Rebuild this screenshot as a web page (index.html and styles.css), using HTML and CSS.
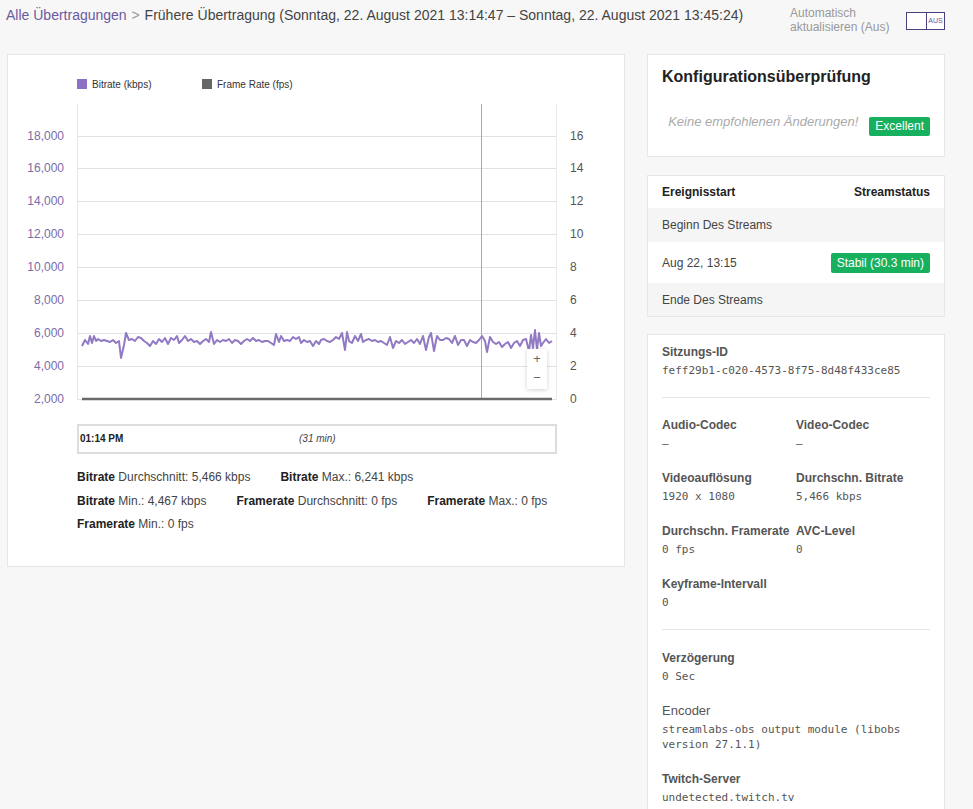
FILE: index.html
```html
<!DOCTYPE html>
<html lang="de">
<head>
<meta charset="utf-8">
<title>Frühere Übertragung</title>
<link rel="stylesheet" href="styles.css">
</head>
<body>
<header class="topbar">
  <div class="crumbs">
    <a class="crumb-link" href="#">Alle Übertragungen</a>
    <span class="crumb-sep">&gt;</span>
    <span class="crumb-current">Frühere Übertragung (Sonntag, 22. August 2021 13:14:47 – Sonntag, 22. August 2021 13:45:24)</span>
  </div>
  <div class="autorefresh">
    <div class="autorefresh-label">Automatisch<br>aktualisieren (Aus)</div>
    <div class="toggle"><span class="toggle-knob"></span><span class="toggle-text">AUS</span></div>
  </div>
</header>

<main class="layout">
  <section class="card chart-card">
    <svg class="chart" width="616" height="409" viewBox="8 55 616 409" xmlns="http://www.w3.org/2000/svg">
      <defs>
        <filter id="btnshadow" x="-50%" y="-50%" width="200%" height="200%">
          <feDropShadow dx="0" dy="1" stdDeviation="2" flood-color="#000" flood-opacity="0.18"/>
        </filter>
      </defs>
      <!-- legend -->
      <rect x="77" y="79" width="10" height="10" fill="#8c72c4"/>
      <text x="92" y="88" class="legend">Bitrate (kbps)</text>
      <rect x="202" y="79" width="10" height="10" fill="#666666"/>
      <text x="217" y="88" class="legend">Frame Rate (fps)</text>

      <!-- grid -->
      <g stroke="#e0e0e6" stroke-width="1">
        <line x1="77" y1="136.5" x2="556" y2="136.5"/>
        <line x1="77" y1="168.5" x2="556" y2="168.5"/>
        <line x1="77" y1="201.5" x2="556" y2="201.5"/>
        <line x1="77" y1="234.5" x2="556" y2="234.5"/>
        <line x1="77" y1="267.5" x2="556" y2="267.5"/>
        <line x1="77" y1="300.5" x2="556" y2="300.5"/>
        <line x1="77" y1="333.5" x2="556" y2="333.5"/>
        <line x1="77" y1="366.5" x2="556" y2="366.5"/>
        <line x1="77" y1="399.5" x2="556" y2="399.5"/>
      </g>
      <g stroke="#e8e8e8" stroke-width="1">
        <line x1="77.5" y1="104" x2="77.5" y2="400"/>
        <line x1="556.5" y1="104" x2="556.5" y2="400"/>
      </g>

      <!-- left axis -->
      <g class="yl" text-anchor="end">
        <text x="64" y="140">18,000</text>
        <text x="64" y="172">16,000</text>
        <text x="64" y="205">14,000</text>
        <text x="64" y="238">12,000</text>
        <text x="64" y="271">10,000</text>
        <text x="64" y="304">8,000</text>
        <text x="64" y="337">6,000</text>
        <text x="64" y="370">4,000</text>
        <text x="64" y="403">2,000</text>
      </g>
      <!-- right axis -->
      <g class="yr">
        <text x="570" y="140">16</text>
        <text x="570" y="172">14</text>
        <text x="570" y="205">12</text>
        <text x="570" y="238">10</text>
        <text x="570" y="271">8</text>
        <text x="570" y="304">6</text>
        <text x="570" y="337">4</text>
        <text x="570" y="370">2</text>
        <text x="570" y="403">0</text>
      </g>

      <!-- crosshair -->
      <line x1="481.5" y1="104" x2="481.5" y2="400" stroke="#a89ed8" stroke-width="1"/>

      <!-- frame rate series -->
      <line x1="82" y1="399" x2="552" y2="399" stroke="#6a6a6a" stroke-width="2.5"/>

      <!-- bitrate series -->
      <polyline fill="none" stroke="#9179c3" stroke-width="2" stroke-linejoin="round" points="82,346 85,340 88,344 90,336 92,343 94,336 96,341 98,339 101,341 104,340 107,341 110,342 113,340 116,343 119,341 121,358 124,345 126,333 129,340 132,339 135,341 138,337 141,338 144,341 147,343 150,346 153,341 156,344 159,339 162,342 165,338 168,344 171,338 174,340 177,336 179,343 182,340 185,336 188,341 191,339 194,342 197,341 200,344 203,341 206,339 209,342 211,332 214,344 217,340 220,342 223,340 226,341 229,339 232,343 235,340 238,341 241,344 244,341 247,339 250,341 253,338 256,341 259,340 262,342 265,341 268,341 271,343 274,345 276,334 279,342 281,336 284,341 287,340 290,341 293,337 296,339 299,337 301,343 304,340 307,342 310,341 313,346 316,341 319,344 321,340 324,339 327,341 330,342 333,340 336,337 339,339 342,333 345,350 347,332 349,341 352,343 355,336 358,341 361,334 363,342 366,340 369,339 372,341 375,340 378,342 381,341 384,343 387,345 390,337 393,348 396,341 399,343 402,340 405,344 408,342 411,340 414,343 417,339 420,344 423,336 426,350 429,337 431,333 434,351 437,336 440,340 443,340 446,338 449,339 452,343 455,336 458,345 461,340 464,340 467,346 470,340 473,342 476,343 479,340 482,336 485,341 487,352 490,337 493,342 496,344 499,342 502,347 505,344 508,342 511,348 514,343 517,341 520,346 523,340 526,339 529,351 531,335 533,348 535,330 537,350 539,333 541,346 543,343 546,339 549,343 552,341"/>

      <!-- zoom buttons -->
      <g filter="url(#btnshadow)">
        <rect x="527" y="349" width="20" height="20" fill="#ffffff"/>
        <rect x="527" y="369" width="20" height="20" fill="#ffffff"/>
      </g>
      <text x="537" y="363" class="zbtn" text-anchor="middle">+</text>
      <text x="537" y="382" class="zbtn" text-anchor="middle">−</text>

      <!-- navigator -->
      <rect x="78" y="425" width="478" height="28" fill="#ffffff" stroke="#dddddd" stroke-width="2"/>
      <text x="80" y="442" class="nav-time">01:14 PM</text>
      <text x="299" y="442" class="nav-dur">(31 min)</text>
    </svg>

    <div class="stats">
      <div class="stat"><b>Bitrate</b> Durchschnitt: 5,466 kbps</div>
      <div class="stat"><b>Bitrate</b> Max.: 6,241 kbps</div>
      <div class="stat"><b>Bitrate</b> Min.: 4,467 kbps</div>
      <div class="stat"><b>Framerate</b> Durchschnitt: 0 fps</div>
      <div class="stat"><b>Framerate</b> Max.: 0 fps</div>
      <div class="stat"><b>Framerate</b> Min.: 0 fps</div>
    </div>
  </section>

  <aside class="side">
    <section class="card config-card">
      <h2 class="config-title">Konfigurationsüberprüfung</h2>
      <div class="config-row">
        <span class="config-note">Keine empfohlenen Änderungen!</span>
        <span class="badge">Excellent</span>
      </div>
    </section>

    <section class="card events-card">
      <div class="ev-row ev-head">
        <span>Ereignisstart</span>
        <span>Streamstatus</span>
      </div>
      <div class="ev-row ev-shade">
        <span>Beginn Des Streams</span>
      </div>
      <div class="ev-row ev-tall">
        <span>Aug 22, 13:15</span>
        <span class="badge">Stabil (30.3 min)</span>
      </div>
      <div class="ev-row ev-shade">
        <span>Ende Des Streams</span>
      </div>
    </section>

    <section class="card info-card">
      <div class="info-item">
        <div class="info-label">Sitzungs-ID</div>
        <div class="info-value">feff29b1-c020-4573-8f75-8d48f433ce85</div>
      </div>
      <hr class="info-rule">
      <div class="info-grid">
        <div class="info-item">
          <div class="info-label">Audio-Codec</div>
          <div class="info-value">–</div>
        </div>
        <div class="info-item">
          <div class="info-label">Video-Codec</div>
          <div class="info-value">–</div>
        </div>
        <div class="info-item">
          <div class="info-label">Videoauflösung</div>
          <div class="info-value">1920 x 1080</div>
        </div>
        <div class="info-item">
          <div class="info-label">Durchschn. Bitrate</div>
          <div class="info-value">5,466 kbps</div>
        </div>
        <div class="info-item">
          <div class="info-label">Durchschn. Framerate</div>
          <div class="info-value">0 fps</div>
        </div>
        <div class="info-item">
          <div class="info-label">AVC-Level</div>
          <div class="info-value">0</div>
        </div>
        <div class="info-item">
          <div class="info-label">Keyframe-Intervall</div>
          <div class="info-value">0</div>
        </div>
      </div>
      <hr class="info-rule info-rule-low">
      <div class="info-item">
        <div class="info-label">Verzögerung</div>
        <div class="info-value">0 Sec</div>
      </div>
      <div class="info-item">
        <div class="info-label info-label-light">Encoder</div>
        <div class="info-value">streamlabs-obs output module (libobs version 27.1.1)</div>
      </div>
      <div class="info-item">
        <div class="info-label">Twitch-Server</div>
        <div class="info-value">undetected.twitch.tv</div>
      </div>
    </section>
  </aside>
</main>
</body>
</html>
```

FILE: styles.css
```css
html, body {
  margin: 0;
  padding: 0;
  overflow: hidden;
}

body {
  background: #f7f7f7;
  font-family: "Liberation Sans", Arial, sans-serif;
  color: #333;
  font-size: 12px;
}

/* ---------- top bar ---------- */
.topbar {
  display: flex;
  justify-content: space-between;
  align-items: flex-start;
  height: 54px;
  padding: 6px 28px 0 6px;
  box-sizing: border-box;
}

.crumbs {
  font-size: 14px;
  line-height: 18px;
  white-space: nowrap;
}

.crumb-link {
  color: #6b5aa0;
  text-decoration: none;
}

.crumb-sep {
  color: #999;
  margin: 0 1px;
}

.crumb-current {
  color: #444;
}

.autorefresh {
  display: flex;
  align-items: flex-start;
  gap: 16px;
}

.autorefresh-label {
  color: #999;
  font-size: 12px;
  line-height: 14px;
  width: 100px;
}

.toggle {
  display: flex;
  margin-top: 6px;
  width: 39px;
  height: 18px;
  border: 1px solid #4e3f7c;
  box-sizing: border-box;
  background: #fff;
}

.toggle-knob {
  width: 19px;
  border-right: 1px solid #4e3f7c;
}

.toggle-text {
  flex: 1;
  font-size: 7px;
  line-height: 16px;
  text-align: center;
  color: #6b5aa0;
}

/* ---------- layout ---------- */
.layout {
  display: flex;
  align-items: flex-start;
  gap: 22px;
  padding-left: 7px;
}

.card {
  background: #fff;
  border: 1px solid #e6e6e6;
  box-sizing: border-box;
}

.chart-card {
  width: 618px;
  padding-bottom: 29px;
}

.chart {
  display: block;
  font-family: "Liberation Sans", Arial, sans-serif;
}

.legend {
  font-size: 10px;
  fill: #333;
}

.yl text {
  font-size: 12px;
  fill: #7a6ca8;
}

.yr text {
  font-size: 12px;
  fill: #555;
}

.zbtn {
  font-size: 13px;
  fill: #666;
}

.nav-time {
  font-size: 10px;
  font-weight: bold;
  fill: #222;
}

.nav-dur {
  font-size: 10px;
  font-style: italic;
  fill: #444;
}

.stats {
  display: flex;
  flex-wrap: wrap;
  column-gap: 30px;
  width: 480px;
  margin: 2px 0 0 69px;
  font-size: 12px;
  line-height: 23.5px;
  color: #444;
}

.stat b {
  color: #222;
}

/* ---------- side column ---------- */
.side {
  width: 298px;
  display: flex;
  flex-direction: column;
}

.config-card {
  padding: 12px 14px 20px;
  height: 103px;
}

.config-title {
  margin: 0;
  font-size: 16px;
  line-height: 20px;
  font-weight: bold;
  color: #222;
}

.config-row {
  display: flex;
  justify-content: flex-end;
  align-items: flex-start;
  gap: 11px;
  margin-top: 27px;
}

.config-note {
  font-size: 13px;
  font-style: italic;
  line-height: 16px;
  color: #aaa;
}

.config-row .badge {
  margin-top: 3px;
}

.badge {
  display: inline-block;
  background: #17b05e;
  color: #fff;
  font-size: 12px;
  line-height: 19px;
  height: 19px;
  padding: 0 6px;
  border-radius: 2px;
}

.events-card {
  margin-top: 18px;
}

.ev-row {
  display: flex;
  justify-content: space-between;
  align-items: center;
  padding: 0 14px;
  height: 34px;
  font-size: 12px;
  color: #444;
}

.ev-head {
  height: 32px;
  font-weight: bold;
  color: #222;
}

.ev-shade {
  background: #f5f5f5;
}

.ev-row:last-child {
  height: 33px;
}

.ev-tall {
  height: 41px;
}

.ev-tall .badge {
  height: 20px;
  line-height: 20px;
  padding: 0 6px;
}

.info-card {
  margin-top: 17px;
  padding: 9px 14px 20px;
}

.info-item {
  margin-bottom: 19px;
}

.info-item:last-child {
  margin-bottom: 0;
}

.info-label {
  font-size: 12px;
  font-weight: bold;
  line-height: 16px;
  color: #555;
  margin-bottom: 3px;
}

.info-label-light {
  font-weight: normal;
  font-size: 13px;
}

.info-value {
  font-family: "DejaVu Sans Mono", "Liberation Mono", monospace;
  font-size: 11px;
  line-height: 15px;
  color: #555;
}

.info-grid {
  display: grid;
  grid-template-columns: 134px 134px;
}

.info-grid .info-item:last-child {
  margin-bottom: 0;
}

.info-rule {
  border: 0;
  border-top: 1px solid #e6e6e6;
  margin: 19px 0;
}

.info-rule-low {
  margin-bottom: 20px;
}
```
